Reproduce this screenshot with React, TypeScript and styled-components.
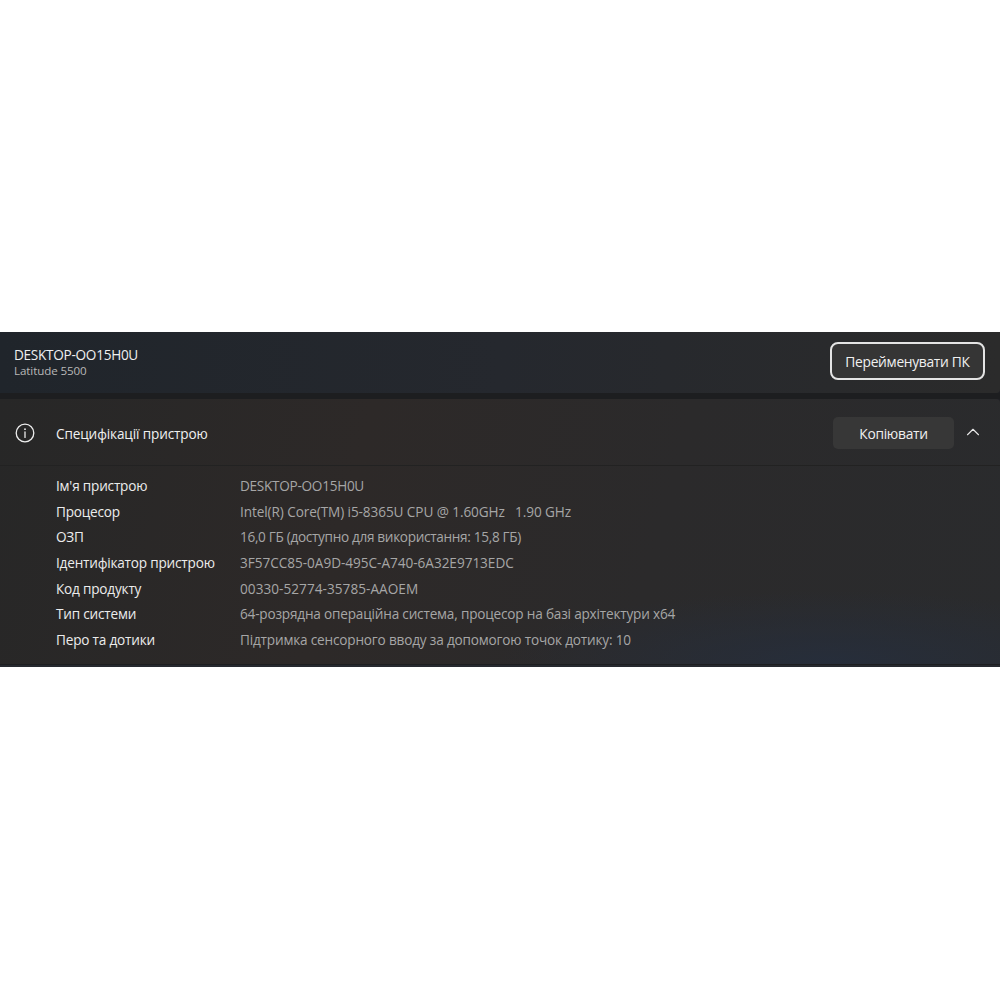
import styled, { createGlobalStyle } from "styled-components";
import { ChevronUp } from "lucide-react";

const GlobalStyle = createGlobalStyle`
  html, body {
    margin: 0;
    padding: 0;
    background: #ffffff;
  }
`;

const Page = styled.div`
  min-height: 100vh;
  box-sizing: border-box;
  padding-bottom: 1px;
  display: flex;
  align-items: center;
`;

const Window = styled.div`
  width: 100%;
  height: 335px;
  display: flex;
  flex-direction: column;
  font-family: "Open Sans", "Noto Sans", sans-serif;
  color: #f2f2f2;
  background: #1f2024;
  overflow: hidden;
`;

const DeviceBar = styled.div`
  height: 61px;
  flex: none;
  display: flex;
  align-items: center;
  justify-content: space-between;
  padding: 0 15px 0 14px;
  background: linear-gradient(90deg, #20252b 0%, #25282e 50%, #2b2b2b 100%);
  border-bottom-right-radius: 4px;
`;

const DeviceName = styled.div`
  display: flex;
  flex-direction: column;
  margin-top: -1px;
`;

const Hostname = styled.span`
  font-size: 13.6px;
  line-height: 17px;
  letter-spacing: -0.28px;
  color: #f0f0f0;
`;

const Model = styled.span`
  font-size: 11.6px;
  line-height: 15px;
  letter-spacing: -0.1px;
  color: #b8b8b8;
`;

const RenameButton = styled.button`
  width: 155px;
  height: 38px;
  margin-top: -3px;
  box-sizing: border-box;
  border: 2px solid #e4e4e4;
  border-radius: 8px;
  background: #353535;
  color: #f0f0f0;
  font-family: inherit;
  font-size: 13.8px;
  letter-spacing: -0.3px;
  padding: 0;
`;

const Gutter = styled.div`
  height: 6px;
  flex: none;
  background: #1d1e20;
`;

const Section = styled.section`
  flex: 1;
  display: flex;
  flex-direction: column;
  background:
    radial-gradient(ellipse 330px 70px at 830px 262px, rgba(38, 46, 60, 0.9), transparent),
    linear-gradient(105deg, #272727 0%, #2d2928 35%, #2b2a2b 65%, #2a2b2d 100%);
  border-top-right-radius: 4px;
  border-bottom: 1px solid #1d1e20;
`;

const BottomEdge = styled.div`
  height: 2px;
  flex: none;
  background: #26292f;
`;

const SectionHeader = styled.div`
  height: 67px;
  flex: none;
  display: flex;
  align-items: center;
  box-sizing: border-box;
  padding: 2px 16px 0 15px;
  border-bottom: 1px solid #222222;
`;

const InfoIcon = styled.svg`
  width: 20px;
  height: 20px;
  flex: none;
`;

const SectionTitle = styled.h2`
  flex: 1;
  margin: 1px 0 0 21px;
  font-size: 13.6px;
  font-weight: 400;
  letter-spacing: -0.13px;
  color: #f0f0f0;
`;

const CopyButton = styled.button`
  width: 121px;
  height: 32px;
  margin-right: 8px;
  border: none;
  border-radius: 5px;
  background: #373737;
  color: #f0f0f0;
  font-family: inherit;
  font-size: 13.8px;
  letter-spacing: -0.3px;
  padding: 0;
`;

const Chevron = styled(ChevronUp)`
  width: 22px;
  height: 22px;
  margin-top: -3px;
  color: #e8e8e8;
`;

const SpecList = styled.dl`
  margin: 0;
  padding: 7px 0 0 56px;
  display: grid;
  grid-template-columns: 184px 1fr;
  grid-auto-rows: 25.6px;
  align-items: center;
`;

const SpecRow = styled.div`
  display: contents;
`;

const SpecLabel = styled.dt`
  font-size: 13.6px;
  letter-spacing: -0.2px;
  color: #ececec;
  white-space: nowrap;
`;

const SpecValue = styled.dd<{ $tracking: number }>`
  margin: 0;
  font-size: 13.6px;
  letter-spacing: ${(props) => props.$tracking}px;
  color: #a6a6a6;
  white-space: pre;
`;

const specs = [
  { label: "Ім'я пристрою", value: "DESKTOP-OO15H0U", tracking: -0.28 },
  { label: "Процесор", value: "Intel(R) Core(TM) i5-8365U CPU @ 1.60GHz   1.90 GHz", tracking: -0.09 },
  { label: "ОЗП", value: "16,0 ГБ (доступно для використання: 15,8 ГБ)", tracking: -0.32 },
  { label: "Ідентифікатор пристрою", value: "3F57CC85-0A9D-495C-A740-6A32E9713EDC", tracking: -0.03 },
  { label: "Код продукту", value: "00330-52774-35785-AAOEM", tracking: 0.04 },
  { label: "Тип системи", value: "64-розрядна операційна система, процесор на базі архітектури x64", tracking: -0.19 },
  { label: "Перо та дотики", value: "Підтримка сенсорного вводу за допомогою точок дотику: 10", tracking: -0.18 },
];

export default function App() {
  return (
    <Page>
      <GlobalStyle />
      <Window>
        <DeviceBar>
          <DeviceName>
            <Hostname>DESKTOP-OO15H0U</Hostname>
            <Model>Latitude 5500</Model>
          </DeviceName>
          <RenameButton>Перейменувати ПК</RenameButton>
        </DeviceBar>
        <Gutter />
        <Section>
          <SectionHeader>
            <InfoIcon viewBox="0 0 20 20" fill="none" stroke="#ededed" strokeWidth="1.3">
              <circle cx="10" cy="10" r="8.8" />
              <path d="M10 9v5.4" strokeLinecap="round" />
              <circle cx="10" cy="6.2" r="0.9" fill="#ededed" stroke="none" />
            </InfoIcon>
            <SectionTitle>Специфікації пристрою</SectionTitle>
            <CopyButton>Копіювати</CopyButton>
            <Chevron strokeWidth={1.2} />
          </SectionHeader>
          <SpecList>
            {specs.map((spec) => (
              <SpecRow key={spec.label}>
                <SpecLabel>{spec.label}</SpecLabel>
                <SpecValue $tracking={spec.tracking}>{spec.value}</SpecValue>
              </SpecRow>
            ))}
          </SpecList>
        </Section>
        <BottomEdge />
      </Window>
    </Page>
  );
}
